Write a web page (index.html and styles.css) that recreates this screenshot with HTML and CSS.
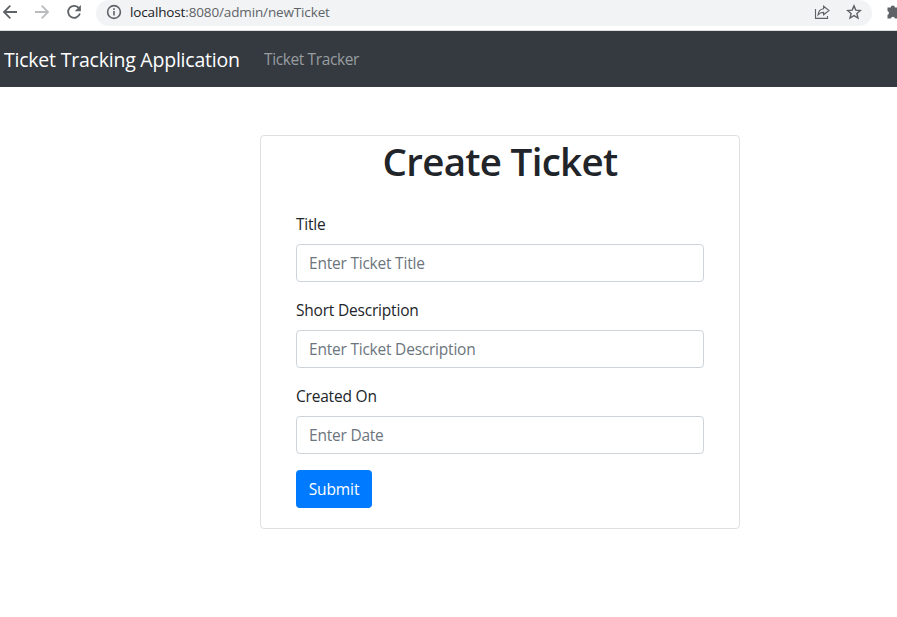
FILE: index.html
```html
<!DOCTYPE html>
<html lang="en">
<head>
<meta charset="utf-8">
<title>Create Ticket</title>
<link rel="stylesheet" href="styles.css">
</head>
<body>
<div class="toolbar">
  <svg class="icon back" viewBox="0 0 16 16"><path d="M15 8H2M8.3 1.7L2 8l6.3 6.3"/></svg>
  <svg class="icon forward" viewBox="0 0 16 16"><path d="M1 8h13M7.7 1.7L14 8l-6.3 6.3"/></svg>
  <svg class="icon reload" viewBox="0 0 16 16"><path d="M13.2 4.6A6 6 0 1 0 13.9 9.5"/><path class="solid" d="M14.9 1v6.2H8.7z"/></svg>
  <div class="address">
    <svg class="icon info" viewBox="0 0 16 16"><circle cx="8" cy="8" r="6.4"/><path d="M8 7v4.6M8 4.2v1.7"/></svg>
    <span class="url"><span class="host">localhost</span>:8080/admin/newTicket</span>
    <svg class="icon share" viewBox="0 0 16 16"><path d="M1.5 5v9.4h12V12"/><path d="M9.6 2.2L15 6.5l-5.4 4.3V8.4C7 8.3 5.4 9.2 4 11c.3-3.4 2.2-5.8 5.6-6.3z"/></svg>
    <svg class="icon star" viewBox="0 0 16 16"><path d="M8 1.9l1.8 4.2 4.6.4-3.5 3 1.1 4.5L8 11.6 4 14l1.1-4.5-3.5-3 4.6-.4z"/></svg>
  </div>
  <svg class="icon puzzle" viewBox="0 0 16 16"><path class="solid" d="M1.5 3.5h3.2a2.1 2.1 0 0 1 4.2 0h3.6v3.4a2.1 2.1 0 0 1 0 4.2v3.4H9a2.1 2.1 0 0 0-4.1 0H1.5V11a2.1 2.1 0 0 0 0-4z"/></svg>
</div>
<nav class="navbar">
  <a class="brand">Ticket Tracking Application</a>
  <a class="nav-link">Ticket Tracker</a>
</nav>
<main class="card">
  <h1>Create Ticket</h1>
  <form class="card-body">
    <div class="group">
      <label for="title">Title</label>
      <input id="title" type="text" placeholder="Enter Ticket Title">
    </div>
    <div class="group">
      <label for="description">Short Description</label>
      <input id="description" type="text" placeholder="Enter Ticket Description">
    </div>
    <div class="group">
      <label for="created">Created On</label>
      <input id="created" type="text" placeholder="Enter Date">
    </div>
    <button type="button">Submit</button>
  </form>
</main>
</body>
</html>
```
FILE: styles.css
```css
* { box-sizing: border-box; }
body {
  margin: 0;
  background: #fff;
  color: #212529;
  font: 400 16px/24px "Segoe UI", "Open Sans", "Noto Sans", sans-serif;
  overflow: hidden;
}
.toolbar {
  display: flex;
  align-items: flex-start;
  height: 31px;
  overflow: hidden;
  border-bottom: 1px solid #dadce0;
}
.icon {
  flex: none;
  width: 16px;
  height: 16px;
  margin-top: 4px;
  fill: none;
  stroke: #5f6368;
  stroke-width: 1.8;
}
.icon .solid { fill: #5f6368; stroke: none; }
.back { margin-left: 2px; }
.forward { margin-left: 16px; stroke: #babcbe; }
.reload { margin-left: 16px; }
.address {
  display: flex;
  flex: none;
  width: 776px;
  height: 26px;
  margin-left: 14px;
  padding-left: 10px;
  background: #f1f3f4;
  border-radius: 13px;
}
.info { stroke-width: 1.6; }
.url {
  width: 684px;
  margin-left: 8px;
  color: #5f6368;
  font-size: 13.5px;
  line-height: 25px;
  letter-spacing: -.14px;
}
.host { color: #202124; }
.share { stroke-width: 1.1; }
.star { margin-left: 16px; stroke-width: 1.4; }
.puzzle { margin-left: 14px; }
.navbar {
  display: flex;
  align-items: center;
  height: 56px;
  padding: 2px 0 0 4px;
  background: #343a40;
}
.brand {
  width: 260px;
  color: #fff;
  font-size: 19.5px;
  letter-spacing: -.22px;
  white-space: nowrap;
}
.nav-link {
  padding-bottom: 2px;
  color: #999da0;
  font-size: 15.5px;
  letter-spacing: -.38px;
}
.card {
  width: 480px;
  height: 394px;
  margin: 48px 0 0 260px;
  border: 1px solid #dfdfdf;
  border-radius: 4px;
}
h1 {
  height: 48px;
  margin: 0 0 8px;
  font-size: 38.5px;
  font-weight: 600;
  line-height: 50px;
  text-align: center;
  letter-spacing: -.7px;
}
.card-body { margin: 0 15px; padding: 20px; }
.group { margin-bottom: 16px; }
label {
  display: block;
  height: 24px;
  margin-bottom: 8px;
  font-size: 15.5px;
  letter-spacing: -.2px;
}
input {
  display: block;
  width: 100%;
  height: 38px;
  padding: 6px 12px;
  border: 1px solid #ced4da;
  border-radius: 4px;
  background: #fff;
  font: inherit;
  font-size: 15.5px;
  letter-spacing: -.22px;
}
input::placeholder { color: #6c757d; opacity: 1; }
button {
  display: block;
  width: 76px;
  height: 38px;
  padding: 0;
  border: 0;
  border-radius: 4px;
  background: #007bff;
  color: #fff;
  font: inherit;
  font-size: 15.5px;
  letter-spacing: -.1px;
}
```
